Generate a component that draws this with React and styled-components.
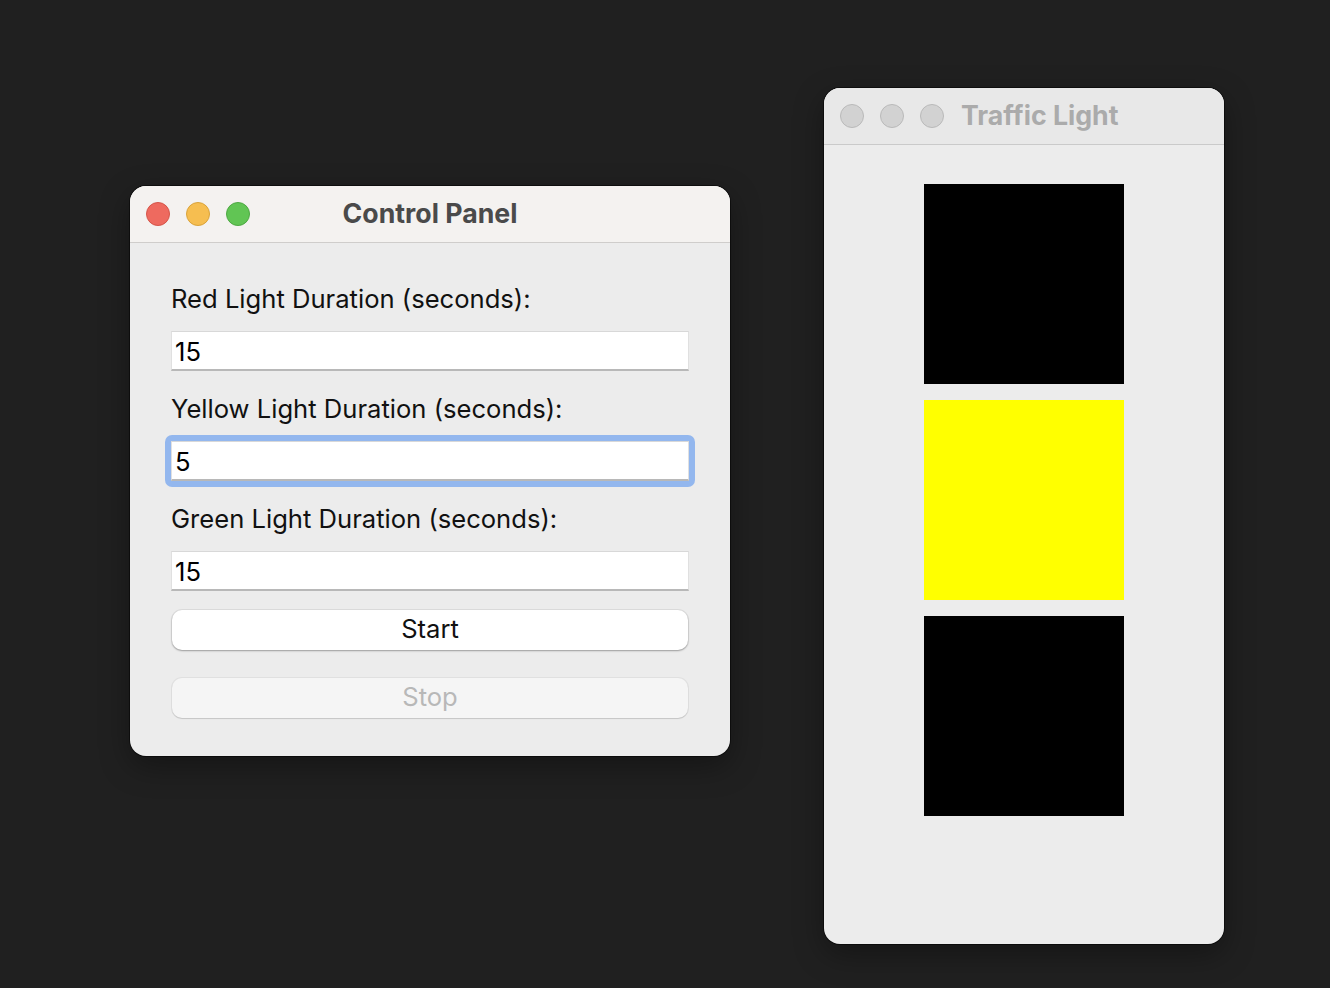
import styled, { createGlobalStyle } from 'styled-components'

const GlobalStyle = createGlobalStyle`
  html, body {
    margin: 0;
    padding: 0;
    background: #202020;
    font-family: "Inter", "Noto Sans", sans-serif;
  }
`

const Desktop = styled.div`
  position: relative;
  width: 1330px;
  height: 988px;
  background: #202020;
  overflow: hidden;
`

const Window = styled.div`
  position: absolute;
  left: ${({ $x }) => $x}px;
  top: ${({ $y }) => $y}px;
  width: ${({ $w }) => $w}px;
  height: ${({ $h }) => $h}px;
  background: #ececec;
  border-radius: 16px;
  overflow: hidden;
  display: flex;
  flex-direction: column;
  box-shadow: 0 0 0 1px rgba(0, 0, 0, 0.5), 0 10px 30px rgba(0, 0, 0, 0.35);
`

const TitleBar = styled.div`
  position: relative;
  height: 56px;
  flex-shrink: 0;
  display: flex;
  align-items: center;
  padding: 0 16px;
  gap: 17px;
  background: ${({ $active }) => ($active ? '#f4f2f0' : '#e8e8e8')};
  border-bottom: 1px solid ${({ $active }) => ($active ? '#cfcdcb' : '#cacaca')};
`

const Dots = styled.div`
  display: flex;
  gap: 16px;
`

const Dot = styled.span`
  width: 24px;
  height: 24px;
  border-radius: 50%;
  box-sizing: border-box;
  background: ${({ $c }) => $c};
  border: 1px solid ${({ $b }) => $b};
`

const Title = styled.div`
  font-size: 26.7px;
  font-weight: 700;
  margin-top: -2px;
  color: ${({ $active }) => ($active ? '#4a4a4a' : '#ababab')};
  ${({ $center }) =>
    $center &&
    `
    position: absolute;
    left: 0;
    right: 0;
    text-align: center;
    pointer-events: none;
  `}
`

const Form = styled.div`
  display: flex;
  flex-direction: column;
  padding: 40px 41px 0;
`

const Field = styled.div`
  display: flex;
  flex-direction: column;
  margin-bottom: 22px;
  &:last-of-type {
    margin-bottom: 19px;
  }
`

const Label = styled.div`
  font-size: 25.6px;
  color: #111;
  height: 32px;
  line-height: 32px;
  margin-bottom: 16px;
`

const FieldWrap = styled.div`
  padding: 6px;
  margin: -6px;
  border-radius: 7px;
  background: ${({ $focus }) => ($focus ? '#93b7ee' : 'transparent')};
`

const Input = styled.input`
  display: block;
  width: 100%;
  height: 40px;
  box-sizing: border-box;
  border: none;
  border-top: 1px solid #d8d8d8;
  border-left: 1px solid #e0e0e0;
  border-right: 1px solid #e0e0e0;
  border-bottom: 2px solid #b8b8b8;
  background: #fff;
  font-family: inherit;
  font-size: 25.6px;
  color: #000;
  padding: 2px 3px 0;
  outline: none;
`

const Button = styled.button`
  display: block;
  width: 516px;
  height: 40px;
  margin: 0 1px 28px;
  padding: 0 0 3px;
  border: none;
  border-radius: 10px;
  font-family: inherit;
  font-size: 25.6px;
  background: ${({ disabled }) => (disabled ? '#f5f5f5' : '#ffffff')};
  color: ${({ disabled }) => (disabled ? '#b8b8b8' : '#111')};
  box-shadow: ${({ disabled }) =>
    disabled
      ? '0 0 0 1px rgba(0,0,0,0.05), 0 1px 1px rgba(0,0,0,0.12)'
      : '0 0 0 1px rgba(0,0,0,0.06), 0 1px 2px rgba(0,0,0,0.3)'};
`

const Lights = styled.div`
  display: flex;
  flex-direction: column;
  align-items: center;
  gap: 16px;
  padding-top: 39px;
`

const Lamp = styled.div`
  width: 200px;
  height: 200px;
  background: ${({ $c }) => $c};
`

const fields = [
  { label: 'Red Light Duration (seconds):', value: '15' },
  { label: 'Yellow Light Duration (seconds):', value: '5', focus: true },
  { label: 'Green Light Duration (seconds):', value: '15' },
]

export default function App() {
  return (
    <>
      <GlobalStyle />
      <Desktop>
        <Window $x={130} $y={186} $w={600} $h={570}>
          <TitleBar $active>
            <Dots>
              <Dot $c="#ee6a5f" $b="#d45549" />
              <Dot $c="#f6be50" $b="#d9a33b" />
              <Dot $c="#61c554" $b="#4ea843" />
            </Dots>
            <Title $active $center>Control Panel</Title>
          </TitleBar>
          <Form>
            {fields.map((f) => (
              <Field key={f.label}>
                <Label>{f.label}</Label>
                <FieldWrap $focus={f.focus}>
                  <Input defaultValue={f.value} />
                </FieldWrap>
              </Field>
            ))}
            <Button>Start</Button>
            <Button disabled>Stop</Button>
          </Form>
        </Window>

        <Window $x={824} $y={88} $w={400} $h={856}>
          <TitleBar>
            <Dots>
              <Dot $c="#d2d2d2" $b="#b9b9b9" />
              <Dot $c="#d2d2d2" $b="#b9b9b9" />
              <Dot $c="#d2d2d2" $b="#b9b9b9" />
            </Dots>
            <Title>Traffic Light</Title>
          </TitleBar>
          <Lights>
            <Lamp $c="#000" />
            <Lamp $c="#ffff00" />
            <Lamp $c="#000" />
          </Lights>
        </Window>
      </Desktop>
    </>
  )
}
